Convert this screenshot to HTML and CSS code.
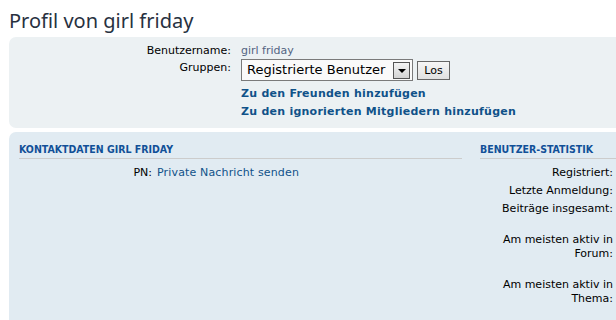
FILE: index.html
```html
<!DOCTYPE html>
<html lang="de">
<head>
<meta charset="UTF-8">
<title>Profil von girl friday</title>
<link rel="stylesheet" href="styles.css">
</head>
<body>
<div class="wrap">
    <h2 class="page-title">Profil von girl friday</h2>

    <div class="panel bg1">
        <dl class="top-details">
            <dt>Benutzername:</dt>
            <dd class="user">girl friday</dd>
            <dt class="groups-label">Gruppen:</dt>
            <dd class="groups">
                <span class="fake-select">Registrierte Benutzer<span class="arrow"></span></span>
                <span class="button">Los</span>
            </dd>
            <dt class="first-action">&nbsp;</dt>
            <dd class="action first-action"><a href="#">Zu den Freunden hinzufügen</a></dd>
            <dt>&nbsp;</dt>
            <dd class="action"><a href="#">Zu den ignorierten Mitgliedern hinzufügen</a></dd>
        </dl>
    </div>

    <div class="panel bg2">
        <div class="columns">
            <div class="column">
                <h3>Kontaktdaten girl friday</h3>
                <dl class="details">
                    <dt>PN:</dt>
                    <dd><a class="plain" href="#">Private Nachricht senden</a></dd>
                </dl>
            </div>
            <div class="column">
                <h3>Benutzer-Statistik</h3>
                <dl class="details stats">
                    <dt>Registriert:</dt>
                    <dd>&nbsp;</dd>
                    <dt>Letzte Anmeldung:</dt>
                    <dd>&nbsp;</dd>
                    <dt class="gap">Beiträge insgesamt:</dt>
                    <dd class="gap">&nbsp;</dd>
                    <dt class="gap">Am meisten aktiv in Forum:</dt>
                    <dd class="gap">&nbsp;</dd>
                    <dt>Am meisten aktiv in Thema:</dt>
                    <dd>&nbsp;</dd>
                </dl>
            </div>
        </div>
    </div>
</div>
</body>
</html>
```

FILE: styles.css
```css
html, body {
    margin: 0;
    padding: 0;
    overflow: hidden;
    background-color: #fff;
}

body {
    font-family: "DejaVu Sans", Verdana, sans-serif;
    font-size: 11px;
    color: #000;
}

.wrap {
    width: 924px;
    padding: 0 9px;
}

a {
    color: #105289;
    text-decoration: none;
}

.page-title {
    font-family: "Noto Sans", "DejaVu Sans", sans-serif;
    font-weight: normal;
    font-size: 20px;
    color: #28313f;
    margin: 0;
    padding: 7px 0 0 0;
    height: 30px;
}

.panel {
    border-radius: 7px;
    padding: 5px 10px;
    margin-bottom: 4px;
}

.bg1 {
    background-color: #ecf1f3;
    height: 81px;
}

.bg2 {
    background-color: #e1ebf2;
    height: 300px;
}

/* obere Angaben */
.top-details {
    display: grid;
    grid-template-columns: 212px 1fr;
    column-gap: 10px;
    row-gap: 0;
    margin: 0;
}

.top-details dt {
    text-align: right;
    line-height: 14px;
    padding-top: 2px;
}

.top-details dd {
    margin: 0;
    line-height: 14px;
    padding-top: 2px;
}

.top-details dt.groups-label {
    padding-top: 3px;
}

.user {
    color: #536482;
}

.groups {
    display: flex;
    align-items: center;
    gap: 4px;
    height: 22px;
    padding-top: 1px !important;
}

.fake-select {
    display: flex;
    align-items: center;
    box-sizing: border-box;
    width: 172px;
    height: 22px;
    border: 1px solid #7a7a7a;
    background-color: #fafafa;
    font-size: 13px;
    padding: 0 2px 0 5px;
    justify-content: space-between;
}

.arrow {
    box-sizing: border-box;
    width: 17px;
    height: 17px;
    border: 1px solid #555;
    background: #dcdcdc linear-gradient(#f4f4f4, #d4d4d4);
    position: relative;
}

.arrow::after {
    content: "";
    position: absolute;
    left: 4px;
    top: 6px;
    border-left: 4px solid transparent;
    border-right: 4px solid transparent;
    border-top: 4px solid #000;
}

.button {
    box-sizing: border-box;
    display: inline-block;
    width: 33px;
    height: 19px;
    line-height: 17px;
    text-align: center;
    border: 1px solid #666;
    background: linear-gradient(#f6f6f6, #e0e0e0);
    font-size: 11px;
    margin-top: 1px;
}

.action {
    font-weight: bold;
    letter-spacing: 0.25px;
    padding-top: 4px !important;
}

.top-details .first-action {
    padding-top: 6px !important;
}

/* Spalten */
.columns {
    display: flex;
    justify-content: space-between;
}

.column {
    width: 443px;
}

.column h3 {
    font-family: "DejaVu Sans Condensed", "DejaVu Sans", sans-serif;
    font-size: 10.5px;
    font-weight: bold;
    text-transform: uppercase;
    color: #115098;
    margin: 5px 0 0 0;
    padding-bottom: 1px;
    border-bottom: 1px solid #ccc;
    line-height: 15px;
}

.details {
    display: grid;
    grid-template-columns: 133px 1fr;
    column-gap: 5px;
    margin: 7px 0 0 0;
}

.details dt {
    text-align: right;
    line-height: 14px;
    margin-bottom: 4px;
}

.details dd {
    margin: 0 0 4px 0;
    line-height: 14px;
}

.stats dt.gap,
.stats dd.gap {
    margin-bottom: 17px;
}

.plain {
    color: #105289;
    letter-spacing: 0.15px;
}
```
